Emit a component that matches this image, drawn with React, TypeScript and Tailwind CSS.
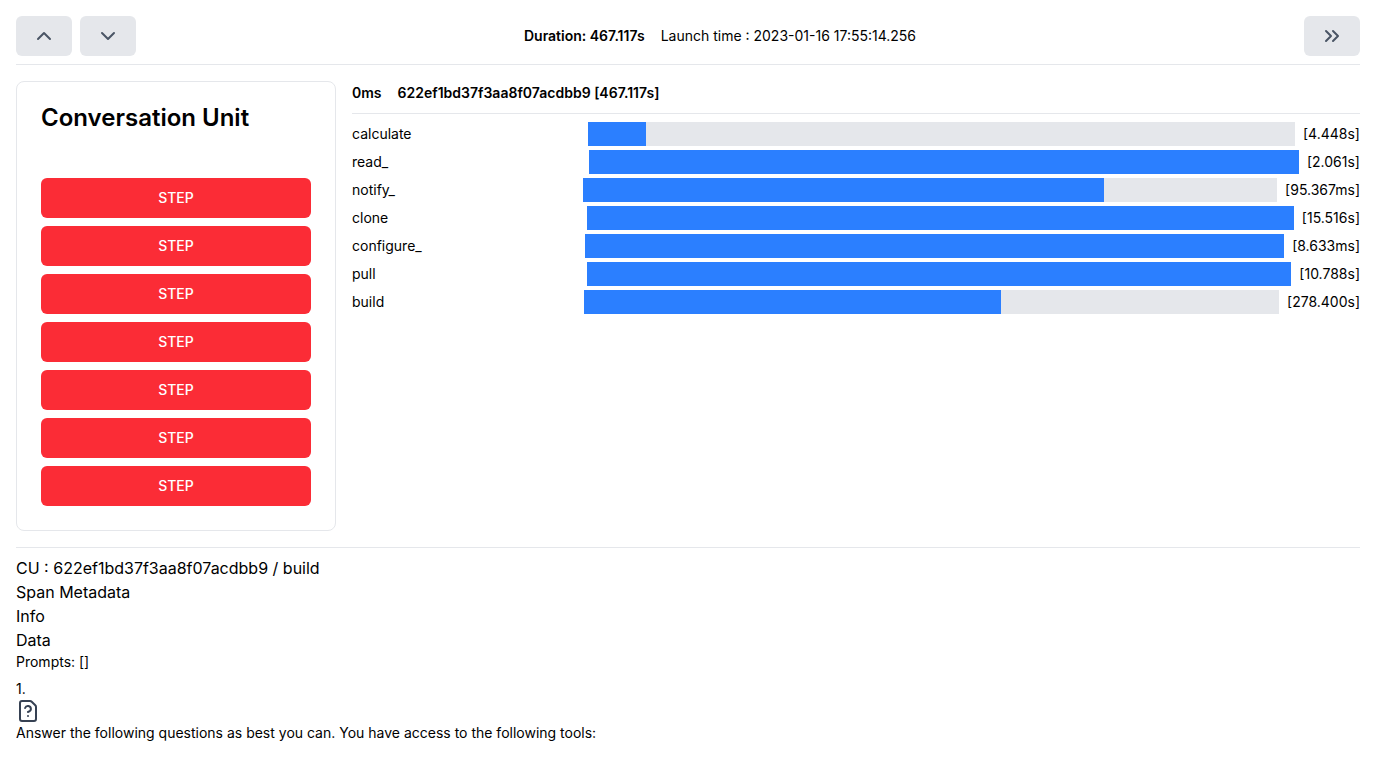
import { ChevronDown, ChevronUp, ChevronsRight, FileQuestion } from "lucide-react";

const rows = [
  { name: "calculate", pct: 8.3, value: "[4.448s]" },
  { name: "read_", pct: 100, value: "[2.061s]" },
  { name: "notify_", pct: 75, value: "[95.367ms]" },
  { name: "clone", pct: 100, value: "[15.516s]" },
  { name: "configure_", pct: 100, value: "[8.633ms]" },
  { name: "pull", pct: 100, value: "[10.788s]" },
  { name: "build", pct: 60, value: "[278.400s]" },
];

const steps = [1, 2, 3, 4, 5, 6, 7];

export default function App() {
  return (
    <div className="p-4 font-['Inter',sans-serif] text-black">
      <header className="flex items-center justify-between border-b border-gray-200 pb-2">
        <div className="flex gap-2">
          <button className="flex h-10 w-14 items-center justify-center rounded-md bg-gray-200 text-gray-600">
            <ChevronUp size={24} />
          </button>
          <button className="flex h-10 w-14 items-center justify-center rounded-md bg-gray-200 text-gray-600">
            <ChevronDown size={24} />
          </button>
        </div>
        <div className="flex gap-4 text-sm">
          <span className="font-semibold">Duration: 467.117s</span>
          <span>Launch time : 2023-01-16 17:55:14.256</span>
        </div>
        <button className="flex h-10 w-14 items-center justify-center rounded-md bg-gray-200 text-gray-600">
          <ChevronsRight size={24} />
        </button>
      </header>

      <main className="flex gap-4 border-b border-gray-200 py-4">
        <section className="w-80 shrink-0 rounded-lg border border-gray-200 p-6">
          <h1 className="-mt-1 mb-11 text-2xl font-semibold">Conversation Unit</h1>
          <div className="flex flex-col gap-2">
            {steps.map((s) => (
              <button key={s} className="h-10 rounded-md bg-red-500 text-sm font-medium text-white">
                STEP
              </button>
            ))}
          </div>
        </section>

        <section className="min-w-0 flex-1">
          <div className="flex gap-4 border-b border-gray-200 pb-2 text-sm font-semibold leading-6">
            <span>0ms</span>
            <span>622ef1bd37f3aa8f07acdbb9 [467.117s]</span>
          </div>
          <div className="mt-2 flex flex-col gap-1">
            {rows.map((r) => (
              <div key={r.name} className="flex h-6 items-center text-sm">
                <div className="w-1/4">{r.name}</div>
                <div className="h-6 w-3/4 bg-gray-200">
                  <div className="h-6 bg-blue-500" style={{ width: `${r.pct}%` }} />
                </div>
                <div className="ml-2 whitespace-nowrap">{r.value}</div>
              </div>
            ))}
          </div>
        </section>
      </main>

      <div className="pt-2">
        <div>CU : 622ef1bd37f3aa8f07acdbb9 / build</div>
        <div>Span Metadata</div>
        <div>Info</div>
        <div>Data</div>
        <div className="text-sm">Prompts: []</div>
        <div className="mt-[7px] text-sm">1.</div>
        <FileQuestion size={24} className="text-gray-700" />
        <p className="text-sm">Answer the following questions as best you can. You have access to the following tools:</p>
      </div>
    </div>
  );
}
